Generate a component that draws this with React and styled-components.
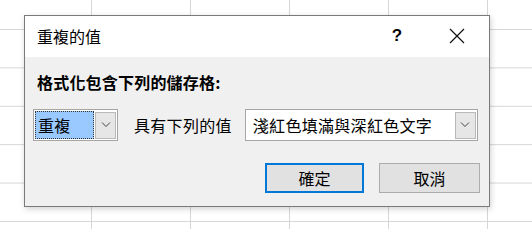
import React from "react";
import styled, { createGlobalStyle } from "styled-components";

const GlobalStyle = createGlobalStyle`
    html, body {
        margin: 0;
        padding: 0;
    }
    body {
        font-family: "Noto Sans CJK TC", "Noto Sans", sans-serif;
        color: #000;
    }
`;

const Sheet = styled.div`
    position: relative;
    width: 532px;
    height: 229px;
    overflow: hidden;
    background-color: #ffffff;
    background-image:
        linear-gradient(to right, #d6d6d6 1px, transparent 1px),
        linear-gradient(to bottom, #d6d6d6 1px, transparent 1px);
    background-size: 99px 100%, 100% 38.4px;
    background-position: 91px 0, 0 29px;
`;

const Dialog = styled.div`
    position: absolute;
    left: 24px;
    top: 15px;
    width: 464px;
    height: 190px;
    border: 1px solid #7a7a7a;
    background: #f0f0f0;
    box-shadow: 1px 2px 6px rgba(0, 0, 0, 0.18);
    display: flex;
    flex-direction: column;
`;

const TitleBar = styled.div`
    height: 41px;
    background: #ffffff;
    display: flex;
    align-items: center;
    padding-left: 12px;
    box-sizing: border-box;
`;

const Title = styled.div`
    flex: 1;
    font-size: 16px;
    line-height: 20px;
    margin-top: -1px;
`;

const HelpButton = styled.div`
    width: 20px;
    font-family: "Liberation Sans", sans-serif;
    font-weight: 700;
    font-size: 17px;
    text-align: center;
    margin-right: 42px;
    margin-top: -2px;
`;

const CloseButton = styled.div`
    width: 16px;
    height: 16px;
    margin-right: 24px;
    margin-top: -2px;
    display: flex;
`;

const Body = styled.div`
    flex: 1;
    display: flex;
    flex-direction: column;
    padding: 15px 9px 0 8px;
`;

const Heading = styled.div`
    font-size: 16px;
    line-height: 20px;
    font-weight: 700;
    margin-left: 4px;
    letter-spacing: 0.2px;
`;

const Row = styled.div`
    display: flex;
    align-items: center;
    margin-top: 17px;
    height: 32px;
`;

const Combo = styled.div`
    width: ${(p) => p.width}px;
    height: 32px;
    box-sizing: border-box;
    border: 1px solid #a6a6a6;
    background: #ffffff;
    display: flex;
    align-items: center;
    padding: 1px;
`;

const ComboValue = styled.div`
    flex: 1;
    height: 100%;
    box-sizing: border-box;
    display: flex;
    align-items: center;
    font-size: 16px;
    letter-spacing: 0.3px;
    padding-left: ${(p) => (p.selected ? 2 : 6)}px;
    background: ${(p) => (p.selected ? "#99c9ff" : "transparent")};
    border: ${(p) => (p.selected ? "1px dotted #333" : "none")};
    margin-right: ${(p) => (p.selected ? 1 : 0)}px;
`;

const ComboButton = styled.div`
    width: 21px;
    height: 27px;
    box-sizing: border-box;
    border: 1px solid #b9b9b9;
    background: #e6e6e6;
    display: flex;
    align-items: center;
    justify-content: center;
`;

const Label = styled.div`
    font-size: 16px;
    letter-spacing: 0.3px;
    margin: 0 13px 0 16px;
`;

const Footer = styled.div`
    display: flex;
    justify-content: flex-end;
    gap: 15px;
    margin-top: 22px;
`;

const Button = styled.div`
    width: ${(p) => p.width}px;
    height: 30px;
    box-sizing: border-box;
    background: #e1e1e1;
    border: ${(p) => (p.primary ? "2px solid #0078d7" : "1px solid #adadad")};
    display: flex;
    align-items: center;
    justify-content: center;
    font-size: 16px;
`;

const Chevron = () => (
    <svg width="10" height="6" viewBox="0 0 10 6">
        <polyline points="1,0.5 5,4.5 9,0.5" fill="none" stroke="#444" strokeWidth="1" />
    </svg>
);

const CloseIcon = () => (
    <svg width="16" height="16" viewBox="0 0 16 16">
        <path d="M1 1 L15 15 M15 1 L1 15" stroke="#111" strokeWidth="1.2" />
    </svg>
);

const App = () => (
    <>
        <GlobalStyle />
        <Sheet>
            <Dialog>
                <TitleBar>
                    <Title>重複的值</Title>
                    <HelpButton>?</HelpButton>
                    <CloseButton>
                        <CloseIcon />
                    </CloseButton>
                </TitleBar>
                <Body>
                    <Heading>格式化包含下列的儲存格:</Heading>
                    <Row>
                        <Combo width={85}>
                            <ComboValue selected>重複</ComboValue>
                            <ComboButton>
                                <Chevron />
                            </ComboButton>
                        </Combo>
                        <Label>具有下列的值</Label>
                        <Combo width={233}>
                            <ComboValue>淺紅色填滿與深紅色文字</ComboValue>
                            <ComboButton>
                                <Chevron />
                            </ComboButton>
                        </Combo>
                    </Row>
                    <Footer>
                        <Button primary width={99}>確定</Button>
                        <Button width={101}>取消</Button>
                    </Footer>
                </Body>
            </Dialog>
        </Sheet>
    </>
);

export default App;
